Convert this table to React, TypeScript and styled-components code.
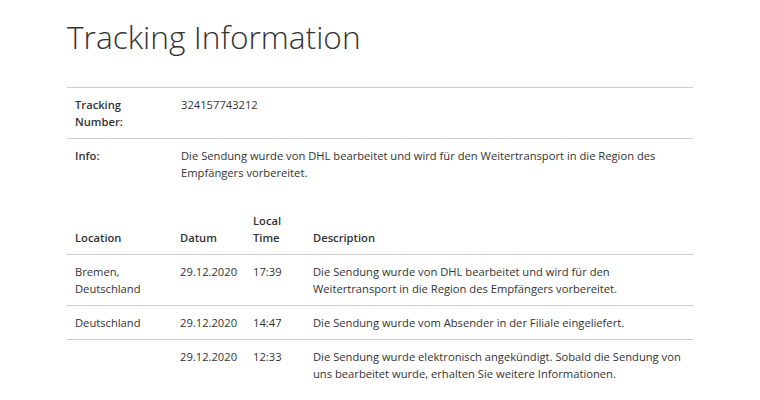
import * as React from 'react';
import styled, { createGlobalStyle } from 'styled-components';

const GlobalStyle = createGlobalStyle`
  body {
    margin: 0;
    background: #ffffff;
    font-family: 'Open Sans', 'Liberation Sans', sans-serif;
    color: #333333;
  }
`;

const Page = styled.div`
  width: 626px;
  padding: 19px 0 0 67px;
`;

const Title = styled.h1`
  margin: 0 0 32px;
  font-size: 31.7px;
  line-height: 36px;
  font-weight: 300;
  color: #333333;
`;

const Table = styled.table<{ $gap?: number }>`
  width: 100%;
  border-collapse: collapse;
  table-layout: fixed;
  font-size: 11.2px;
  line-height: 17px;
  margin-bottom: ${(p) => p.$gap || 0}px;
`;

const Row = styled.tr<{ $ruled?: boolean }>`
  border-top: ${(p) => (p.$ruled ? '1px solid #cccccc' : 'none')};
`;

// widths are content widths; each cell adds 16px of padding
const HeadCell = styled.th<{ $w?: number }>`
  width: ${(p) => (p.$w ? `${p.$w}px` : 'auto')};
  padding: 8px;
  text-align: left;
  vertical-align: bottom;
  font-weight: 600;
`;

const Label = styled.th`
  width: 90px;
  padding: 8px;
  text-align: left;
  vertical-align: top;
  font-weight: 600;
`;

const Cell = styled.td`
  padding: 8px;
  vertical-align: top;
`;

const Body = styled.tbody`
  border-top: 1px solid #cccccc;
`;

type Event = { location: string; date: string; time: string; text: string };

const events: Event[] = [
  {
    location: 'Bremen, Deutschland',
    date: '29.12.2020',
    time: '17:39',
    text: 'Die Sendung wurde von DHL bearbeitet und wird für den Weitertransport in die Region des Empfängers vorbereitet.',
  },
  {
    location: 'Deutschland',
    date: '29.12.2020',
    time: '14:47',
    text: 'Die Sendung wurde vom Absender in der Filiale eingeliefert.',
  },
  {
    location: '',
    date: '29.12.2020',
    time: '12:33',
    text: 'Die Sendung wurde elektronisch angekündigt. Sobald die Sendung von uns bearbeitet wurde, erhalten Sie weitere Informationen.',
  },
];

export default function App() {
  return (
    <Page>
      <GlobalStyle />
      <Title>Tracking Information</Title>
      <Table $gap={15}>
        <tbody>
          <Row $ruled>
            <Label>Tracking Number:</Label>
            <Cell>324157743212</Cell>
          </Row>
          <Row $ruled>
            <Label>Info:</Label>
            <Cell>
              Die Sendung wurde von DHL bearbeitet und wird für den Weitertransport in die
              Region des Empfängers vorbereitet.
            </Cell>
          </Row>
        </tbody>
      </Table>
      <Table>
        <thead>
          <tr>
            <HeadCell $w={89}>Location</HeadCell>
            <HeadCell $w={57}>Datum</HeadCell>
            <HeadCell $w={44}>Local Time</HeadCell>
            <HeadCell>Description</HeadCell>
          </tr>
        </thead>
        <Body>
          {events.map((e, i) => (
            <Row key={i} $ruled={i > 0}>
              <Cell>{e.location}</Cell>
              <Cell>{e.date}</Cell>
              <Cell>{e.time}</Cell>
              <Cell>{e.text}</Cell>
            </Row>
          ))}
        </Body>
      </Table>
    </Page>
  );
}
